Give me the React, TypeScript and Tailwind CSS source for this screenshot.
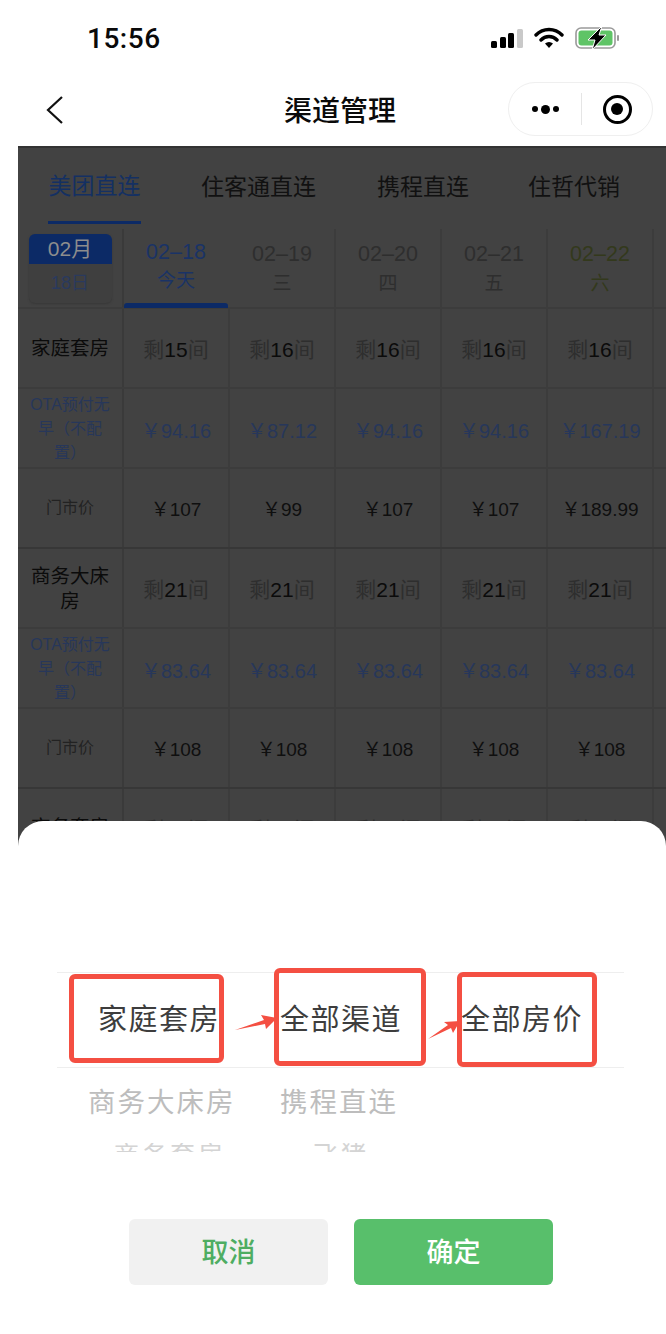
import React from "react";

const days = [
  { date: "02–18", week: "今天", active: true },
  { date: "02–19", week: "三" },
  { date: "02–20", week: "四" },
  { date: "02–21", week: "五" },
  { date: "02–22", week: "六", weekend: true },
];

const rooms = [
  { name: "家庭套房", left: ["15", "16", "16", "16", "16"], ota: ["94.16", "87.12", "94.16", "94.16", "167.19"], shop: ["107", "99", "107", "107", "189.99"] },
  { name: "商务大床房", left: ["21", "21", "21", "21", "21"], ota: ["83.64", "83.64", "83.64", "83.64", "83.64"], shop: ["108", "108", "108", "108", "108"] },
];

const Cell = ({ children }: { children?: React.ReactNode }) => (
  <div className="w-[106px] shrink-0 h-full flex items-center justify-center border-r-2 border-[#3c3c3c]">{children}</div>
);

const Row = ({ label, children, thick }: { label: React.ReactNode; children?: React.ReactNode; thick?: boolean }) => (
  <div className={`flex h-[80px] border-b-2 ${thick ? "border-[#373737]" : "border-[#3c3c3c]"}`}>
    <div className="w-[106px] shrink-0 h-full flex items-center justify-center text-center border-r-2 border-[#3a3a3a] px-[8px]">{label}</div>
    {children}
  </div>
);

const Left = ({ n }: { n: string }) => (
  <span className="mt-[4px] text-[21px] text-[#2e2e2e]">
    剩<span className="text-[#0b0b0b]">{n}</span>间
  </span>
);

export default function App() {
  return (
    <div className="relative w-[666px] h-[1334px] overflow-hidden bg-white flex flex-col font-['Liberation_Sans','Noto_Sans_CJK_SC',sans-serif]">
      {/* 状态栏 */}
      <div className="h-[76px] shrink-0 flex items-center justify-between pl-[87px] pr-[45px]">
        <span className="mt-[2px] text-[28px] font-medium font-['Roboto','Noto_Sans_CJK_SC',sans-serif] text-[#0a0a0a] tracking-[0.5px]">15:56</span>
        <div className="flex items-center gap-[11px]">
          <svg width="32" height="20" viewBox="0 0 32 20">
            <rect x="0" y="13" width="6" height="7" rx="1.5" fill="#000" />
            <rect x="9" y="9" width="6" height="11" rx="1.5" fill="#000" />
            <rect x="17" y="5" width="6" height="15" rx="1.5" fill="#000" />
            <rect x="26" y="1" width="6" height="19" rx="1.5" fill="#c9c9c9" />
          </svg>
          <svg width="30" height="22" viewBox="0 0 30 22">
            <path d="M2 8a18 18 0 0 1 26 0M7 13a11 11 0 0 1 16 0" fill="none" stroke="#000" strokeWidth="3.4" strokeLinecap="round" />
            <path d="M11 16.5a6 6 0 0 1 8 0L15 21z" fill="#000" />
          </svg>
          <svg width="46" height="24" viewBox="0 0 46 24">
            <rect x="1" y="2" width="39" height="20" rx="5" fill="none" stroke="#9a9a9a" strokeWidth="1.6" />
            <rect x="3.5" y="4.5" width="34" height="15" rx="3" fill="#5fc466" />
            <rect x="42" y="9" width="2" height="6" rx="1" fill="#9a9a9a" />
            <path d="M27 0 L13 14 H20 L17 24 L31 9 H24 Z" fill="#000" stroke="#fff" strokeWidth="1" />
          </svg>
        </div>
      </div>

      {/* 导航栏 */}
      <div className="relative h-[70px] shrink-0 flex items-center justify-center pl-[14px]">
        <svg className="absolute left-[45px] top-[19px]" width="20" height="30" viewBox="0 0 20 30">
          <path d="M17 2 L3 15 L17 28" fill="none" stroke="#111" strokeWidth="2.2" />
        </svg>
        <span className="mt-[1px] text-[28px] font-medium text-[#0a0a0a] leading-none">渠道管理</span>
        <div className="absolute left-[508px] top-[6px] w-[145px] h-[54px] rounded-full border border-[#efefef] flex items-center">
          <div className="w-[72px] flex items-center justify-center gap-[3px]">
            <span className="w-[6px] h-[6px] rounded-full bg-black" />
            <span className="w-[9px] h-[9px] rounded-full bg-black" />
            <span className="w-[6px] h-[6px] rounded-full bg-black" />
          </div>
          <div className="w-px h-[32px] bg-[#e5e5e5]" />
          <div className="flex-1 flex items-center justify-center">
            <div className="w-[29px] h-[29px] rounded-full border-[3px] border-black flex items-center justify-center">
              <span className="w-[12px] h-[12px] rounded-full bg-black" />
            </div>
          </div>
        </div>
      </div>

      {/* 遮罩下的内容 */}
      <div className="ml-[18px] flex-1 bg-[#424242] border-t-2 border-[#333] overflow-hidden">
        <div className="h-[81px] flex items-start text-[23px] text-[#111]">
          <div className="ml-[30px] w-[93px] h-[76px] pt-[4px] border-b-[3px] border-[#0c2a66] flex items-center justify-center text-[#143063] whitespace-nowrap">美团直连</div>
          <span className="ml-[60px] mt-[22px] leading-[34px] whitespace-nowrap">住客通直连</span>
          <span className="ml-[61px] mt-[22px] leading-[34px] whitespace-nowrap">携程直连</span>
          <span className="ml-[59px] mt-[22px] leading-[34px] whitespace-nowrap">住哲代销</span>
        </div>
        <div className="flex h-[80px] border-b-2 border-[#3c3c3c]">
          <div className="w-[106px] shrink-0 h-full flex items-start justify-center pt-[5px] border-r-2 border-[#3a3a3a]">
            <div className="w-[83px] h-[69px] rounded-[6px] bg-[#3f3f3f] overflow-hidden flex flex-col shadow-[0_1px_2px_#383838]">
              <div className="h-[30px] bg-[#0c2a66] text-[#8d8d8d] text-[21px] leading-[30px] text-center">02月</div>
              <div className="flex-1 text-[#2a3a5e] text-[18px] flex items-center justify-center">18日</div>
            </div>
          </div>
          {days.map((d) => (
            <div key={d.date} className={`relative w-[106px] shrink-0 h-full flex flex-col items-center pt-[8px] border-r-2 ${d.active ? "border-transparent text-[#1a3366]" : "border-[#3c3c3c] " + (d.weekend ? "text-[#33391c]" : "text-[#2e2e2e]")}`}>
              <span className={`text-[21.5px] leading-[30px] ${d.active ? "" : "mt-[2px]"}`}>{d.date}</span>
              <span className={`leading-[30px] ${d.active ? "text-[19px] -mt-[1px]" : "text-[19px]"}`}>{d.week}</span>
              {d.active && <div className="absolute left-0 right-0 bottom-[-1px] h-[5px] rounded-t-[3px] bg-[#0c2a66]" />}
            </div>
          ))}
        </div>
        {rooms.map((r) => (
          <div key={r.name}>
            <Row label={<span className="mt-[1px] text-[19.5px] leading-[25px] text-[#0b0b0b]">{r.name}</span>}>
              {r.left.map((n, i) => <Cell key={i}><Left n={n} /></Cell>)}
            </Row>
            <Row label={<span className="block mt-[1px] text-[16px] leading-[24px] text-[#27375a]">OTA预付无<br />早（不配<br />置）</span>}>
              {r.ota.map((p, i) => <Cell key={i}><span className="mt-[5px] text-[20px] text-[#27375a]">￥{p}</span></Cell>)}
            </Row>
            <Row thick label={<span className="text-[16px] text-[#222]">门市价</span>}>
              {r.shop.map((p, i) => <Cell key={i}><span className="mt-[5px] text-[19px] text-[#0f0f0f]">￥{p}</span></Cell>)}
            </Row>
          </div>
        ))}
        <Row label={<span className="text-[19.5px] text-[#0b0b0b]">商务套房</span>}>
          {[0, 1, 2, 3, 4].map((i) => <Cell key={i}><Left n="16" /></Cell>)}
        </Row>
      </div>

      {/* 底部选择器 */}
      <div className="absolute left-[18px] top-[821px] w-[648px] h-[513px] bg-white rounded-t-[25px]">
        <div className="mt-[151px] ml-[39px] mr-[42px] h-[96px] border-y border-[#eeeeee] flex items-center pt-[2px] text-[29px] text-[#3d3d3d] tracking-[1.5px]">
          <span className="ml-[41px] w-[182px] whitespace-nowrap">家庭套房</span>
          <span className="w-[181px] whitespace-nowrap">全部渠道</span>
          <span className="whitespace-nowrap">全部房价</span>
        </div>
        <div className="mx-[39px] h-[70px] flex items-center text-[27.5px] text-[#bdbdbd] tracking-[2px]">
          <span className="ml-[31px] w-[192px] whitespace-nowrap">商务大床房</span>
          <span>携程直连</span>
        </div>
        <div className="mt-[5px] mx-[39px] h-[9px] overflow-hidden flex text-[25px] leading-[26px] text-[#d4d4d4] tracking-[3px]">
          <span className="ml-[57px] w-[199px] -mt-[1px]">商务套房</span>
          <span className="-mt-[1px]">飞猪</span>
        </div>
        <div className="mt-[67px] flex justify-center gap-[26px] -translate-x-[1px] text-[27px] font-medium">
          <button className="w-[199px] h-[66px] pt-[2px] rounded-[6px] bg-[#f1f1f1] text-[#4ead62]">取消</button>
          <button className="w-[199px] h-[66px] pt-[2px] rounded-[6px] bg-[#58bf6b] text-white">确定</button>
        </div>
      </div>

      {/* 标注 */}
      <div className="absolute left-[69px] top-[974px] w-[155px] h-[89px] rounded-[6px] border-[5px] border-[#f44f42]" />
      <div className="absolute left-[274px] top-[968px] w-[152px] h-[98px] rounded-[6px] border-[5px] border-[#f44f42]" />
      <div className="absolute left-[457px] top-[972px] w-[140px] h-[95px] rounded-[6px] border-[5px] border-[#f44f42]" />
      <svg className="absolute left-[230px] top-[1005px]" width="50" height="30" viewBox="0 0 50 30">
        <path d="M5 25 L34 15 L31 10 L47 13 L36 24 L35 19 Z" fill="#f44f42" />
      </svg>
      <svg className="absolute left-[424px] top-[1012px]" width="40" height="30" viewBox="0 0 40 30">
        <path d="M4 27 L24 13 L20 10 L36 9 L29 21 L27 16 Z" fill="#f44f42" />
      </svg>
    </div>
  );
}
